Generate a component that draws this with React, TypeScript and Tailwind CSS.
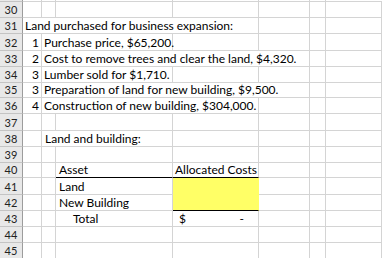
import type { ReactNode } from "react";

type Cell = {
  w: string;
  text?: ReactNode;
  cls?: string;
};

type RowDef = {
  n: number;
  h: string;
  cells: Cell[];
};

const A = "w-[19px]";
const B = "w-[14px]";
const C = "w-[117px]";
const D = "w-[86px]";
const E = "w-[51px]";
const F = "w-[16px]";
const G = "flex-1";

const blank = (w: string): Cell => ({ w });
const tail = [blank(E), blank(F), blank(G)];
const empty = [A, B, C, D, E, F, G].map(blank);

const rows: RowDef[] = [
  { n: 30, h: "h-[16px]", cells: empty },
  {
    n: 31,
    h: "h-[16px]",
    cells: [{ w: "w-[236px]", text: "Land purchased for business expansion:", cls: "pl-[2px]" }, ...tail],
  },
  {
    n: 32,
    h: "h-[17px]",
    cells: [
      { w: A, text: "1", cls: "justify-end pr-[2px]" },
      { w: "w-[131px]", text: "Purchase price, $65,200.", cls: "pl-[2px]" },
      blank(D),
      ...tail,
    ],
  },
  {
    n: 33,
    h: "h-[16px]",
    cells: [
      { w: A, text: "2", cls: "justify-end pr-[2px]" },
      { w: "w-[268px]", text: "Cost to remove trees and clear the land, $4,320.", cls: "pl-[2px]" },
      blank(F),
      blank(G),
    ],
  },
  {
    n: 34,
    h: "h-[16px]",
    cells: [
      { w: A, text: "3", cls: "justify-end pr-[2px]" },
      { w: "w-[131px]", text: "Lumber sold for $1,710.", cls: "pl-[2px]" },
      blank(D),
      ...tail,
    ],
  },
  {
    n: 35,
    h: "h-[15px]",
    cells: [
      { w: A, text: "3", cls: "justify-end pr-[2px]" },
      { w: "w-[268px]", text: "Preparation of land for new building, $9,500.", cls: "pl-[2px]" },
      blank(F),
      blank(G),
    ],
  },
  {
    n: 36,
    h: "h-[16px]",
    cells: [
      { w: A, text: "4", cls: "justify-end pr-[2px]" },
      { w: "w-[217px]", text: "Construction of new building, $304,000.", cls: "pl-[2px]" },
      ...tail,
    ],
  },
  { n: 37, h: "h-[17px]", cells: empty },
  {
    n: 38,
    h: "h-[16px]",
    cells: [blank(A), { w: "w-[131px]", text: "Land and building:", cls: "pl-[3px]" }, blank(D), ...tail],
  },
  { n: 39, h: "h-[16px]", cells: empty },
  {
    n: 40,
    h: "h-[15px]",
    cells: [
      blank(A),
      blank(B),
      { w: C, text: "Asset", cls: "pl-[3px] border-b-black" },
      { w: D, text: "Allocated Costs", cls: "pl-[2px] border-b-black" },
      ...tail,
    ],
  },
  {
    n: 41,
    h: "h-[17px]",
    cells: [
      blank(A),
      blank(B),
      { w: C, text: "Land", cls: "pl-[3px]" },
      { w: D, cls: "bg-[#ffff66] border-b-[#ffff66] border-r-[#ffff66]" },
      ...tail,
    ],
  },
  {
    n: 42,
    h: "h-[16px]",
    cells: [
      blank(A),
      blank(B),
      { w: C, text: "New Building", cls: "pl-[3px]" },
      { w: D, cls: "bg-[#ffff66] border-b-black border-r-[#ffff66]" },
      ...tail,
    ],
  },
  {
    n: 43,
    h: "h-[16px]",
    cells: [
      blank(A),
      blank(B),
      { w: C, text: "Total", cls: "pl-[17px]" },
      {
        w: D,
        text: (
          <span className="flex w-full justify-between pl-[6px] pr-[14px]">
            <span>$</span>
            <span>-</span>
          </span>
        ),
      },
      ...tail,
    ],
  },
  { n: 44, h: "h-[16px]", cells: empty },
  { n: 45, h: "h-[16px]", cells: empty },
];

function SheetRow({ row }: { row: RowDef }) {
  return (
    <div className={`flex ${row.h}`}>
      <div className="flex w-[23px] shrink-0 items-end justify-center border-r border-b border-r-[#9c9c9c] border-b-[#c4c4c4] bg-[#e8e8e8] pb-[1px] text-[11px] text-[#222]">
        {row.n}
      </div>
      {row.cells.map((c, i) => (
        <div
          key={i}
          className={`flex shrink-0 items-end overflow-visible whitespace-nowrap border-r border-b border-[#d4d4d4] pb-[1px] ${c.w} ${c.cls ?? ""}`}
        >
          {c.text}
        </div>
      ))}
    </div>
  );
}

export default function App() {
  return (
    <div className="h-[258px] w-[382px] overflow-hidden bg-white font-['Lato',sans-serif] text-[12px] leading-[13px] text-black">
      {/* tail of row 29 */}
      <div className="flex h-[2px]">
        <div className="w-[23px] border-r border-b border-r-[#9c9c9c] border-b-[#c4c4c4] bg-[#e8e8e8]" />
        <div className="w-[19px] border-r border-b border-[#d4d4d4]" />
        <div className="w-[14px] border-r border-b border-[#d4d4d4]" />
        <div className="w-[117px] border-r border-b border-[#d4d4d4]" />
        <div className="w-[86px] border-r border-b border-[#d4d4d4]" />
        <div className="w-[51px] border-r border-b border-[#d4d4d4]" />
        <div className="w-[16px] border-r border-b border-[#d4d4d4]" />
        <div className="flex-1 border-b border-[#d4d4d4]" />
      </div>
      {rows.map((r) => (
        <SheetRow key={r.n} row={r} />
      ))}
    </div>
  );
}
